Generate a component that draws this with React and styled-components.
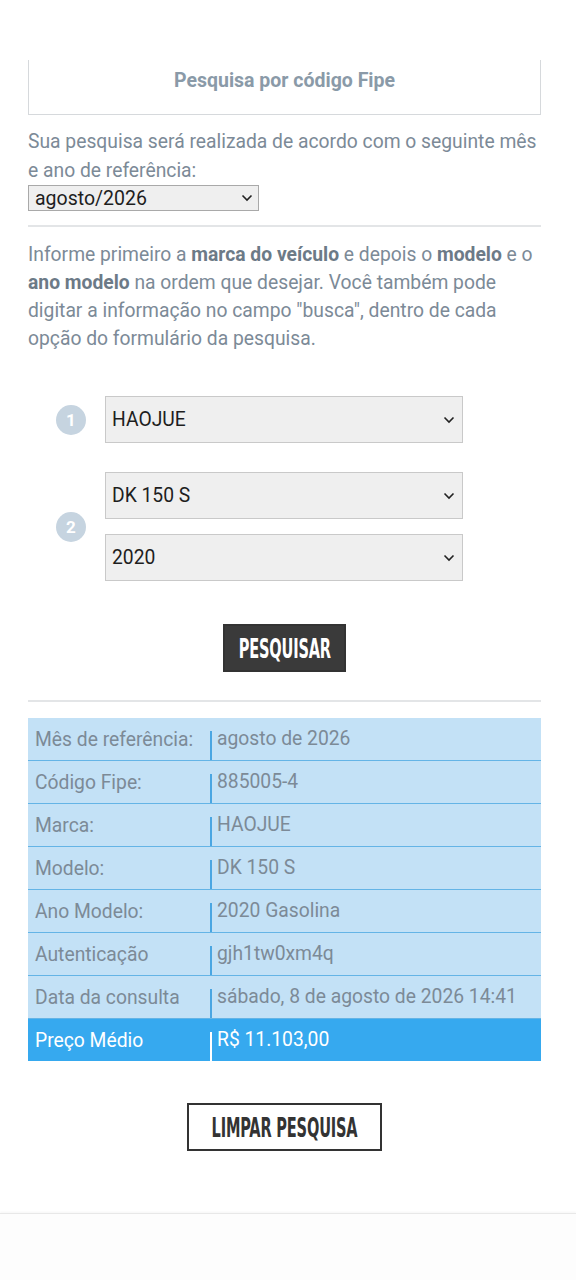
import React from 'react';
import styled, { createGlobalStyle } from 'styled-components';

const GlobalStyle = createGlobalStyle`
  body {
    margin: 0;
    background: #ffffff;
    font-family: Roboto, "Liberation Sans", sans-serif;
  }
`;

const Page = styled.div`
  width: 513px;
  margin-left: 28px;
  padding-top: 60px;
`;

const TabBox = styled.div`
  height: 55px;
  box-sizing: border-box;
  padding-top: 10px;
  border: 1px solid #d6d9dc;
  border-top: none;
  text-align: center;
  line-height: 22px;
  font-size: 19.5px;
  font-weight: bold;
  color: #8a9aa8;
`;

const Text = styled.p`
  margin: ${(p) => p.$margin || '14px 0 0'};
  font-size: 19.3px;
  line-height: ${(p) => p.$lh || '28px'};
  color: #7c8a97;

  b {
    color: #6c7a87;
  }
`;

const Divider = styled.hr`
  border: none;
  height: 2px;
  background: #e3e5e7;
  margin: ${(p) => p.$margin || '14px 0'};
`;

const SelectWrap = styled.div`
  position: relative;
  width: ${(p) => p.$width || '358px'};
`;

const Select = styled.select`
  appearance: none;
  display: block;
  width: 100%;
  height: ${(p) => (p.$small ? '26px' : '47px')};
  margin: 0;
  padding: 0 6px;
  background: #efefef;
  border: 1px solid ${(p) => (p.$small ? '#a9a9a9' : '#c9c9c9')};
  border-radius: 0;
  font-family: Roboto, "Liberation Sans", sans-serif;
  font-size: ${(p) => (p.$small ? '19.5px' : '19.3px')};
  color: #1e1e1e;
`;

const Chevron = styled.svg`
  position: absolute;
  right: ${(p) => (p.$small ? '6px' : '8px')};
  top: 50%;
  transform: translateY(-50%);
  pointer-events: none;
`;

const Steps = styled.div`
  margin-top: 43px;
  display: flex;
  flex-direction: column;
  gap: 29px;
`;

const Step = styled.div`
  display: flex;
  align-items: center;
  gap: 19px;
  padding-left: 28px;
`;

const Badge = styled.span`
  width: 30px;
  height: 30px;
  border-radius: 50%;
  background: #c6d4e0;
  color: #ffffff;
  font-weight: bold;
  font-size: 17px;
  display: flex;
  align-items: center;
  justify-content: center;
  flex-shrink: 0;
`;

const Stack = styled.div`
  display: flex;
  flex-direction: column;
  gap: 15px;
`;

const Center = styled.div`
  display: flex;
  justify-content: center;
  margin-top: ${(p) => p.$top};
`;

const Button = styled.button`
  width: ${(p) => p.$width};
  height: 48px;
  padding: 0;
  display: flex;
  align-items: center;
  justify-content: center;
  overflow: visible;
  border: 2px solid #333333;
  background: ${(p) => (p.$dark ? '#3a3a3a' : '#ffffff')};
  color: ${(p) => (p.$dark ? '#ffffff' : '#333333')};
  font-family: "DejaVu Sans Condensed", "Liberation Sans", sans-serif;
  font-weight: bold;
  font-size: 27px;
  letter-spacing: -0.3px;
`;

const Squeeze = styled.span`
  display: inline-block;
  white-space: nowrap;
  transform: scaleX(0.6);
`;

const Table = styled.div`
  margin-top: 16px;
`;

const Row = styled.div`
  display: flex;
  height: 42px;
  background: ${(p) => (p.$highlight ? '#36a9ef' : '#c3e1f6')};
  border-bottom: ${(p) => (p.$highlight ? 'none' : '1px solid #64b4e6')};
  color: ${(p) => (p.$highlight ? '#ffffff' : '#7c8a97')};
  font-size: 19.3px;
`;

const Label = styled.div`
  width: 182px;
  padding-left: 7px;
  display: flex;
  align-items: center;
  box-sizing: border-box;
`;

const Value = styled.div`
  flex: 1;
  display: flex;
  flex-direction: column;
`;

const ValueText = styled.span`
  margin-top: 13px;
  flex: 1;
  border-left: 2px solid ${(p) => (p.$highlight ? '#ffffff' : '#4aa6e2')};
  padding-left: 5px;
  line-height: 16px;
  white-space: nowrap;
`;

const Footer = styled.div`
  margin-top: 62px;
  height: 66px;
  background: #fdfdfd;
  border-top: 1px solid #e8e8e8;
  box-shadow: 0 -1px 2px rgba(0, 0, 0, 0.04);
`;

const Arrow = ({ small }) => (
  <Chevron $small={small} width="12" height="8" viewBox="0 0 12 8">
    <path d="M1.5 1.5 L6 6 L10.5 1.5" fill="none" stroke="#222" strokeWidth="1.6" />
  </Chevron>
);

const Dropdown = ({ value, width, small }) => (
  <SelectWrap $width={width}>
    <Select $small={small} defaultValue={value}>
      <option>{value}</option>
    </Select>
    <Arrow small={small} />
  </SelectWrap>
);

const rows = [
  ['Mês de referência:', 'agosto de 2026'],
  ['Código Fipe:', '885005-4'],
  ['Marca:', 'HAOJUE'],
  ['Modelo:', 'DK 150 S'],
  ['Ano Modelo:', '2020 Gasolina'],
  ['Autenticação', 'gjh1tw0xm4q'],
  ['Data da consulta', 'sábado, 8 de agosto de 2026 14:41'],
];

const App = () => (
  <>
    <GlobalStyle />
    <Page>
      <TabBox>Pesquisa por código Fipe</TabBox>
      <Text $margin="13px 0 0" $lh="28.5px">
        Sua pesquisa será realizada de acordo com o seguinte mês e ano de referência:
      </Text>
      <Dropdown value="agosto/2026" width="231px" small />
      <Divider />
      <Text $margin="0">
        Informe primeiro a <b>marca do veículo</b> e depois o <b>modelo</b> e o{' '}
        <b>ano modelo</b> na ordem que desejar. Você também pode digitar a informação no
        campo "busca", dentro de cada opção do formulário da pesquisa.
      </Text>
      <Steps>
        <Step>
          <Badge>1</Badge>
          <Dropdown value="HAOJUE" />
        </Step>
        <Step>
          <Badge>2</Badge>
          <Stack>
            <Dropdown value="DK 150 S" />
            <Dropdown value="2020" />
          </Stack>
        </Step>
      </Steps>
      <Center $top="43px">
        <Button $dark $width="123px">
          <Squeeze>PESQUISAR</Squeeze>
        </Button>
      </Center>
      <Divider $margin="28px 0 0" />
      <Table>
        {rows.map(([label, value]) => (
          <Row key={label}>
            <Label>{label}</Label>
            <Value>
              <ValueText>{value}</ValueText>
            </Value>
          </Row>
        ))}
        <Row $highlight>
          <Label>Preço Médio</Label>
          <Value>
            <ValueText $highlight>R$ 11.103,00</ValueText>
          </Value>
        </Row>
      </Table>
      <Center $top="42px">
        <Button $width="195px">
          <Squeeze>LIMPAR PESQUISA</Squeeze>
        </Button>
      </Center>
    </Page>
    <Footer />
  </>
);

export default App;
